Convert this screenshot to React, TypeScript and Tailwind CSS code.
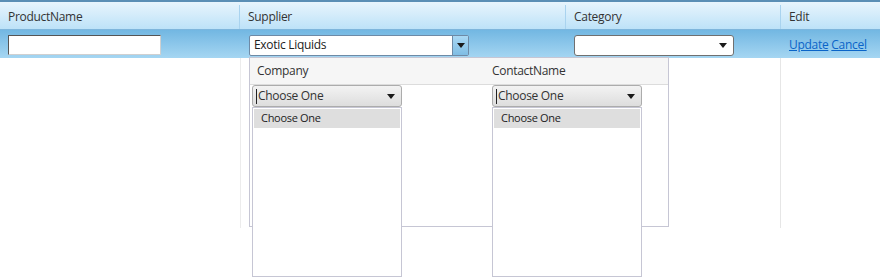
import React from "react";

const font = { fontFamily: '"Open Sans", "Noto Sans", sans-serif' };

function Caret() {
  return (
    <svg width="8" height="5" viewBox="0 0 8 5" className="block">
      <path d="M0 0h8L4 5z" fill="#1a1a1a" />
    </svg>
  );
}

function GraySelect() {
  return (
    <div className="flex h-[22px] w-[150px] items-center justify-between rounded-[3px] border border-[#acacac] bg-gradient-to-b from-[#f3f3f3] to-[#dddddd] pl-[3px] pr-[6px] text-[12px] text-[#333]">
      <span className="flex items-center">
        <span className="mr-px h-[15px] w-px bg-[#222]" />
        Choose One
      </span>
      <Caret />
    </div>
  );
}

function ListBox() {
  return (
    <div className="h-[170px] w-[150px] border border-[#c6c6d4] bg-white p-px">
      <div className="flex h-[19px] items-center bg-[#dedede] pl-[7px] text-[11px] text-[#222]">
        Choose One
      </div>
    </div>
  );
}

export default function App() {
  return (
    <div
      className="relative h-[280px] w-[880px] overflow-hidden bg-white text-[12px] tracking-[-0.3px] text-[#333]"
      style={font}
    >
      {/* header */}
      <div className="h-[2px] bg-[#5b8fb5]" />
      <div className="flex h-[28px] border-b border-[#7fb6dc] bg-gradient-to-b from-[#e8f5fd] to-[#bde2f8] pt-[3px]">
        <div className="flex w-[240px] items-center border-r border-[#a9d3ef] pl-[8px]">ProductName</div>
        <div className="flex w-[326px] items-center border-r border-[#a9d3ef] pl-[8px]">Supplier</div>
        <div className="flex w-[215px] items-center border-r border-[#a9d3ef] pl-[8px]">Category</div>
        <div className="flex flex-1 items-center pl-[8px]">Edit</div>
      </div>
      {/* edit row */}
      <div className="flex h-[28px] items-center bg-gradient-to-b from-[#72b7e2] to-[#a5d6f2] pt-[2px]">
        <div className="w-[240px] pl-[8px]">
          <div className="h-[20px] w-[153px] border border-t-[#555] border-l-[#555] border-r-[#d0d0d0] border-b-[#d0d0d0] bg-white" />
        </div>
        <div className="w-[326px] pl-[9px]">
          <div className="flex h-[21px] w-[220px] items-stretch rounded-[2px] border border-[#6e8aa6] bg-white">
            <div className="flex flex-1 items-center pl-[4px] text-[12px] text-[#222]">Exotic Liquids</div>
            <div className="flex w-[16px] items-center justify-center border-l border-[#6e8aa6] bg-gradient-to-b from-[#a9d8f4] to-[#7fbde4]">
              <Caret />
            </div>
          </div>
        </div>
        <div className="w-[215px] pl-[8px]">
          <div className="flex h-[21px] w-[160px] items-center justify-end rounded-[3px] border border-[#707070] bg-white pr-[6px]">
            <Caret />
          </div>
        </div>
        <div className="flex flex-1 items-center gap-[3px] pl-[8px] text-[12px] text-[#0a64c8]">
          <a className="underline" href="#">Update</a>
          <a className="underline" href="#">Cancel</a>
        </div>
      </div>
      {/* body */}
      <div className="flex h-[170px]">
        <div className="w-[241px] border-r border-[#ececec]" />
        <div className="w-[540px] border-r border-[#e6e6e6]" />
      </div>

      {/* popup */}
      <div className="absolute left-[249px] top-[57px] h-[170px] w-[420px] border border-[#c6c6d4] bg-white">
        <div className="flex h-[27px] items-center border-b border-[#dcdcdc] bg-[#f6f6f6]">
          <div className="w-[235px] pl-[7px]">Company</div>
          <div className="pl-[7px]">ContactName</div>
        </div>
      </div>
      <div className="absolute left-[252px] top-[85px] flex flex-col">
        <GraySelect />
        <ListBox />
      </div>
      <div className="absolute left-[492px] top-[85px] flex flex-col">
        <GraySelect />
        <ListBox />
      </div>
    </div>
  );
}
